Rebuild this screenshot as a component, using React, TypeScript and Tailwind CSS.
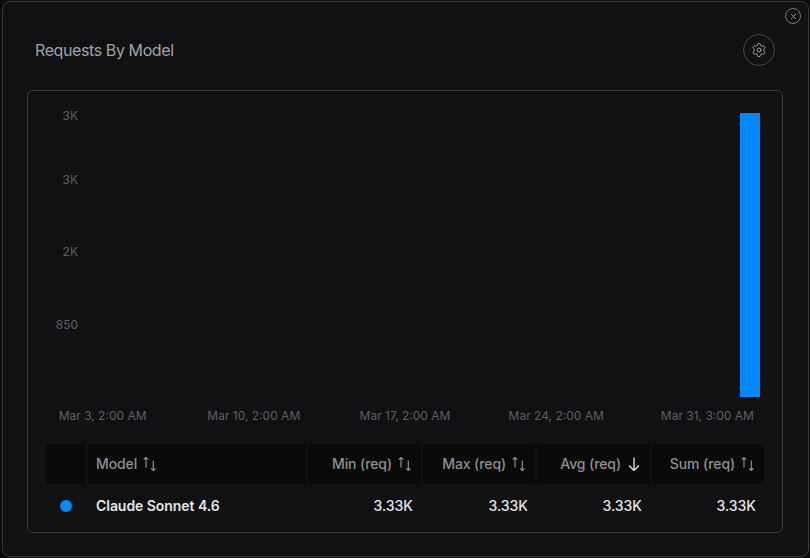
import React from 'react';
import { Settings, X } from 'lucide-react';

const yLabels = [
  { text: '3K', className: 'h-4 mt-[17px]' },
  { text: '3K', className: 'h-4 mt-12' },
  { text: '2K', className: 'h-4 mt-14' },
  { text: '850', className: 'h-4 mt-[57px]' },
];

const xLabels = ['Mar 3, 2:00 AM', 'Mar 10, 2:00 AM', 'Mar 17, 2:00 AM', 'Mar 24, 2:00 AM', 'Mar 31, 3:00 AM'];

const columns = [
  { label: 'Min (req)', width: 'w-[113px]', valuePad: 'pr-2' },
  { label: 'Max (req)', width: 'w-[112px]', valuePad: 'pr-[7px]' },
  { label: 'Avg (req)', width: 'w-[113px]', valuePad: 'pr-2', sorted: true },
  { label: 'Sum (req)', width: 'w-[112px]', valuePad: 'pr-2' },
];

const SortIcon = ({ sorted }: { sorted?: boolean }) =>
  sorted ? (
    <svg width="12" height="14" viewBox="0 0 12 14" fill="none" stroke="#e4e4e7" strokeWidth="1.3" className="ml-[7px] mr-[2px]">
      <path d="M6 0.5V13.5M1 8.5l5 5 5-5" />
    </svg>
  ) : (
    <svg width="16" height="14" viewBox="0 0 16 14" fill="none" stroke="#8e8e93" strokeWidth="1.2" className="ml-[5px]">
      <path d="M4 10.5V0.5M1.8 2.7L4 0.5l2.2 2.2" />
      <path d="M11.3 3.5v10M9.1 11.3l2.2 2.2 2.2-2.2" />
    </svg>
  );

export default function App() {
  return (
    <div className="w-[810px] h-[558px] bg-[#0c0c0d] pl-[2px] pr-[1px] pt-[1px] pb-[1px] overflow-hidden font-['Inter',sans-serif]">
      <div className="relative w-full h-full bg-[#111113] border border-[#3a3a3d] rounded-lg flex flex-col">
        <button className="absolute top-[6px] right-[7px] w-4 h-4 rounded-full border border-[#77777c] flex items-center justify-center text-[#a1a1a6]">
          <X size={9} strokeWidth={2.5} />
        </button>

        <header className="h-[88px] flex items-center justify-between pl-[32px] pr-[33px] pt-2 shrink-0">
          <h1 className="text-base text-[#a1a1aa] tracking-[-0.4px]">Requests By Model</h1>
          <button className="w-8 h-8 rounded-full border border-[#48484c] flex items-center justify-center text-[#a1a1a6]">
            <Settings size={16} strokeWidth={1.5} />
          </button>
        </header>

        <section className="ml-[24px] mr-[25px] h-[443px] border border-[#3a3a3d] rounded-md flex flex-col">
          <div className="flex h-[306px] shrink-0">
            <div className="w-[50px] flex flex-col items-end text-xs text-[#5f5f63] leading-4">
              {yLabels.map((l, i) => (
                <div key={i} className={l.className}>{l.text}</div>
              ))}
            </div>
            <div className="flex-1 flex justify-end pr-[22px] pt-[22px]">
              <div className="w-5 h-[284px] bg-[#0088ff]" />
            </div>
          </div>

          <div className="grid grid-cols-5 w-[756px] -ml-[1px] text-center text-xs text-[#5f5f63] leading-4 mt-[11px]">
            {xLabels.map(l => (
              <span key={l}>{l}</span>
            ))}
          </div>

          <div className="mx-[18px] mt-[20px]">
            <div className="flex gap-[2px] h-10 text-sm text-[#8e8e93] font-medium tracking-[-0.1px]">
              <div className="w-10 bg-[#0a0a0b]" />
              <div className="w-[218px] bg-[#0a0a0b] flex items-center pl-2">
                Model
                <SortIcon />
              </div>
              {columns.map(c => (
                <div key={c.label} className={`${c.width} bg-[#0a0a0b] flex items-center justify-end pr-2`}>
                  {c.label}
                  <SortIcon sorted={c.sorted} />
                </div>
              ))}
            </div>
            <div className="flex gap-[2px] h-11 items-center text-sm text-[#e4e4e7] font-medium">
              <div className="w-10 flex justify-center">
                <span className="w-3 h-3 rounded-full bg-[#0088ff]" />
              </div>
              <div className="w-[218px] pl-2 font-semibold tracking-[-0.05px]">Claude Sonnet 4.6</div>
              {columns.map(c => (
                <div key={c.label} className={`${c.width} text-right ${c.valuePad}`}>3.33K</div>
              ))}
            </div>
          </div>
        </section>
      </div>
    </div>
  );
}
